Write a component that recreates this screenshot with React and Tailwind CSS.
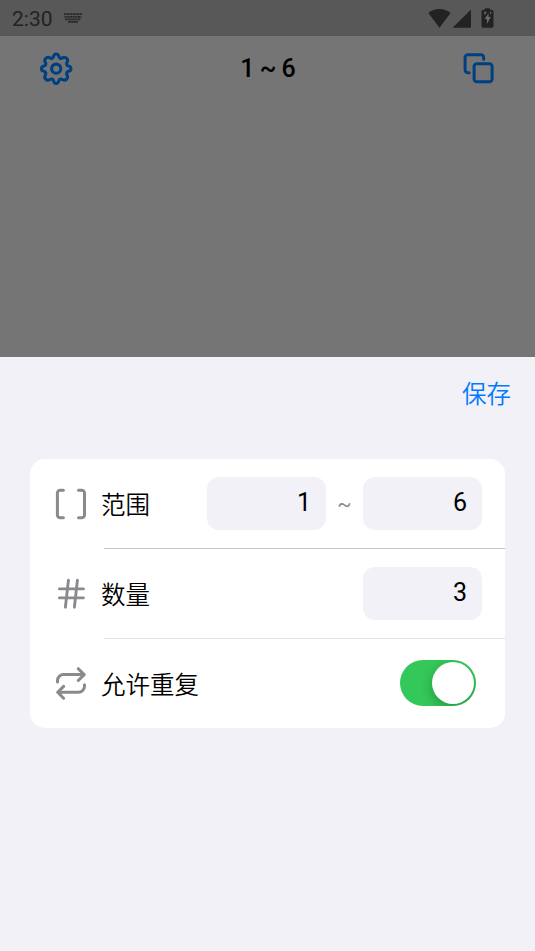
import React, { useState } from 'react';

const GearIcon = () => (
  <svg width="34" height="34" viewBox="-17.2 -16.7 34 34" fill="none" stroke="#003f82" strokeWidth="3.1" strokeLinejoin="round">
    <path d="M0-14.7C1.6-14.7 2.3-13.6 2.6-12.3C3-10.4 4.7-9.9 6.2-10.8C7.6-11.6 9.1-11.8 10.4-10.4C11.8-9.1 11.6-7.6 10.8-6.2C9.9-4.7 10.4-3 12.3-2.6C13.6-2.3 14.7-1.6 14.7 0C14.7 1.6 13.6 2.3 12.3 2.6C10.4 3 9.9 4.7 10.8 6.2C11.6 7.6 11.8 9.1 10.4 10.4C9.1 11.8 7.6 11.6 6.2 10.8C4.7 9.9 3 10.4 2.6 12.3C2.3 13.6 1.6 14.7 0 14.7C-1.6 14.7-2.3 13.6-2.6 12.3C-3 10.4-4.7 9.9-6.2 10.8C-7.6 11.6-9.1 11.8-10.4 10.4C-11.8 9.1-11.6 7.6-10.8 6.2C-9.9 4.7-10.4 3-12.3 2.6C-13.6 2.3-14.7 1.6-14.7 0C-14.7-1.6-13.6-2.3-12.3-2.6C-10.4-3-9.9-4.7-10.8-6.2C-11.6-7.6-11.8-9.1-10.4-10.4C-9.1-11.8-7.6-11.6-6.2-10.8C-4.7-9.9-3-10.4-2.6-12.3C-2.3-13.6-1.6-14.7 0-14.7Z" />
    <circle r="4.6" />
  </svg>
);

const CopyIcon = () => (
  <svg width="32" height="32" viewBox="0.2 0.5 32 32" fill="none" stroke="#003f82" strokeWidth="3" strokeLinecap="round" strokeLinejoin="round">
    <rect x="11.3" y="11.3" width="18" height="18" rx="2.7" />
    <path d="M6.4 20.3H5a2.7 2.7 0 0 1-2.7-2.7V5A2.7 2.7 0 0 1 5 2.3h13.2A2.7 2.7 0 0 1 20.9 5v1.7" />
  </svg>
);

const BracketsIcon = () => (
  <svg width="32" height="32" viewBox="0 0 32 32" fill="none" stroke="#8a8a8e" strokeWidth="3" strokeLinecap="round" strokeLinejoin="round">
    <path d="M8.7 2.2H5.5A2.8 2.8 0 0 0 2.7 5v22a2.8 2.8 0 0 0 2.8 2.8h3.2M23.8 2.2H27A2.8 2.8 0 0 1 29.8 5v22a2.8 2.8 0 0 1-2.8 2.8h-3.2" transform="translate(-.3 0)" />
  </svg>
);

const HashIcon = () => (
  <svg width="32" height="32" viewBox="0 0 32 32" fill="none" stroke="#8a8a8e" strokeWidth="2.9" strokeLinecap="round">
    <path d="M4.4 10.9h24M4.4 19.9h24M13.4 2.3l-3 26.9M22.4 2.3l-3 26.9" />
  </svg>
);

const RepeatIcon = () => (
  <svg width="32" height="34" viewBox="0 0 32 34" fill="none" stroke="#8a8a8e" strokeWidth="3" strokeLinecap="round" strokeLinejoin="round">
    <path d="M23.3 1.7l5.9 5.9-5.9 5.9M28.6 7.6H8.5a6 6 0 0 0-6 6v1.5M8.6 19.4l-5.9 5.9 5.9 5.9M3.3 25.3h20.2a6 6 0 0 0 6-6v-1.5" />
  </svg>
);

const KeyboardIcon = () => (
  <svg width="18" height="10" viewBox="0 0 18 10" stroke="#2a2a2a" fill="none">
    <path d="M0 1.2h18" strokeWidth="1.7" strokeDasharray="2.6 .5" />
    <path d="M.5 3.8h17" strokeWidth="1.8" strokeDasharray="2.2 .5" />
    <path d="M1 6.4h16" strokeWidth="1.6" strokeDasharray="2.6 .5" />
    <path d="M4 8.9h10" strokeWidth="1.7" />
  </svg>
);

const StatusIcons = () => (
  <svg width="67" height="22" viewBox="0 0 67 22" fill="#222222">
    <path d="M.4 6.1C3.6 3.2 7.4 2 11.5 2s7.9 1.2 11.1 4.1L11.5 20.8Z" />
    <path d="M43 2.5V20.8H24.7Z" />
    <path d="M57 1.4h5V2.9h2a1.6 1.6 0 0 1 1.6 1.6v14.7a1.6 1.6 0 0 1-1.6 1.6h-8.8a1.6 1.6 0 0 1-1.6-1.6V4.5a1.6 1.6 0 0 1 1.6-1.6H57Z" transform="translate(-.1 -.1)" />
    <path d="M60.5 6.6l-3.9 5.5h2.3v4.9l3.9-7h-2.3ZM56 5.2l2.6-.6-1.6 4ZM61.7 4.6l1.6.4-.4 3.2Z" fill="#6c6c6c" />
  </svg>
);

const NumberField = ({ value, onChange }) => (
  <input
    value={value}
    onChange={(e) => onChange(e.target.value)}
    className="w-[119px] h-[53px] rounded-xl bg-[#f2f1f7] pr-[15px] pb-[3px] text-right text-[25px] text-black outline-none"
  />
);

const Row = ({ icon, label, children }) => (
  <div className="flex h-[89px] items-center pl-[25px] pr-[23px]">
    {icon}
    <span className="ml-[14px] flex-1 pt-[5px] text-[24.5px] font-[350] leading-9 text-black">{label}</span>
    {children}
  </div>
);

const App = () => {
  const [min, setMin] = useState('1');
  const [max, setMax] = useState('6');
  const [count, setCount] = useState('3');
  const [repeat, setRepeat] = useState(true);

  return (
    <div className="flex h-[951px] w-[535px] flex-col overflow-hidden bg-[#757575] font-[Roboto,'Noto_Sans_CJK_SC',sans-serif]">
      {/* Status bar */}
      <div className="flex h-9 shrink-0 items-center bg-[#585858] pl-3 pr-[40px]">
        <span className="pt-px text-[21px] font-[450] leading-9 text-[#222222]">2:30</span>
        <div className="ml-[11px] flex-1"><KeyboardIcon /></div>
        <StatusIcons />
      </div>

      {/* Header */}
      <div className="flex h-[65px] shrink-0 items-center justify-between pl-[39px] pr-[40px]">
        <button><GearIcon /></button>
        <h1 className="pt-px text-[25px] font-medium [word-spacing:-1px] text-black">1 ~ 6</h1>
        <button><CopyIcon /></button>
      </div>

      {/* Settings sheet */}
      <div className="mt-[256px] flex-1 bg-[#f2f1f7] px-[30px]">
        <div className="-mr-[6px] flex h-[102px] justify-end pt-5">
          <button className="h-9 text-[24.5px] font-[350] leading-9 text-[#007aff]">保存</button>
        </div>

        <div className="rounded-[15px] bg-white">
          <Row icon={<BracketsIcon />} label="范围">
            <NumberField value={min} onChange={setMin} />
            <span className="w-[37px] pt-0.5 text-center text-[21px] text-[#8a8a8e]">~</span>
            <NumberField value={max} onChange={setMax} />
          </Row>
          <div className="ml-[74px] h-px bg-[#c6c6c8]" />
          <Row icon={<HashIcon />} label="数量">
            <NumberField value={count} onChange={setCount} />
          </Row>
          <div className="ml-[74px] h-px bg-[#e3e3e5]" />
          <Row icon={<RepeatIcon />} label="允许重复">
            <button
              onClick={() => setRepeat(!repeat)}
              className={`mr-1.5 mb-0.5 flex h-[46px] w-[76px] items-center overflow-hidden rounded-full px-[2px] ${repeat ? 'justify-end bg-[#34c759]' : 'justify-start bg-[#e9e9eb]'}`}
            >
              <span className="h-[42px] w-[42px] rounded-full bg-white shadow-[0_4px_12px_rgba(0,0,0,0.25)]" />
            </button>
          </Row>
        </div>
      </div>
    </div>
  );
};

export default App;
